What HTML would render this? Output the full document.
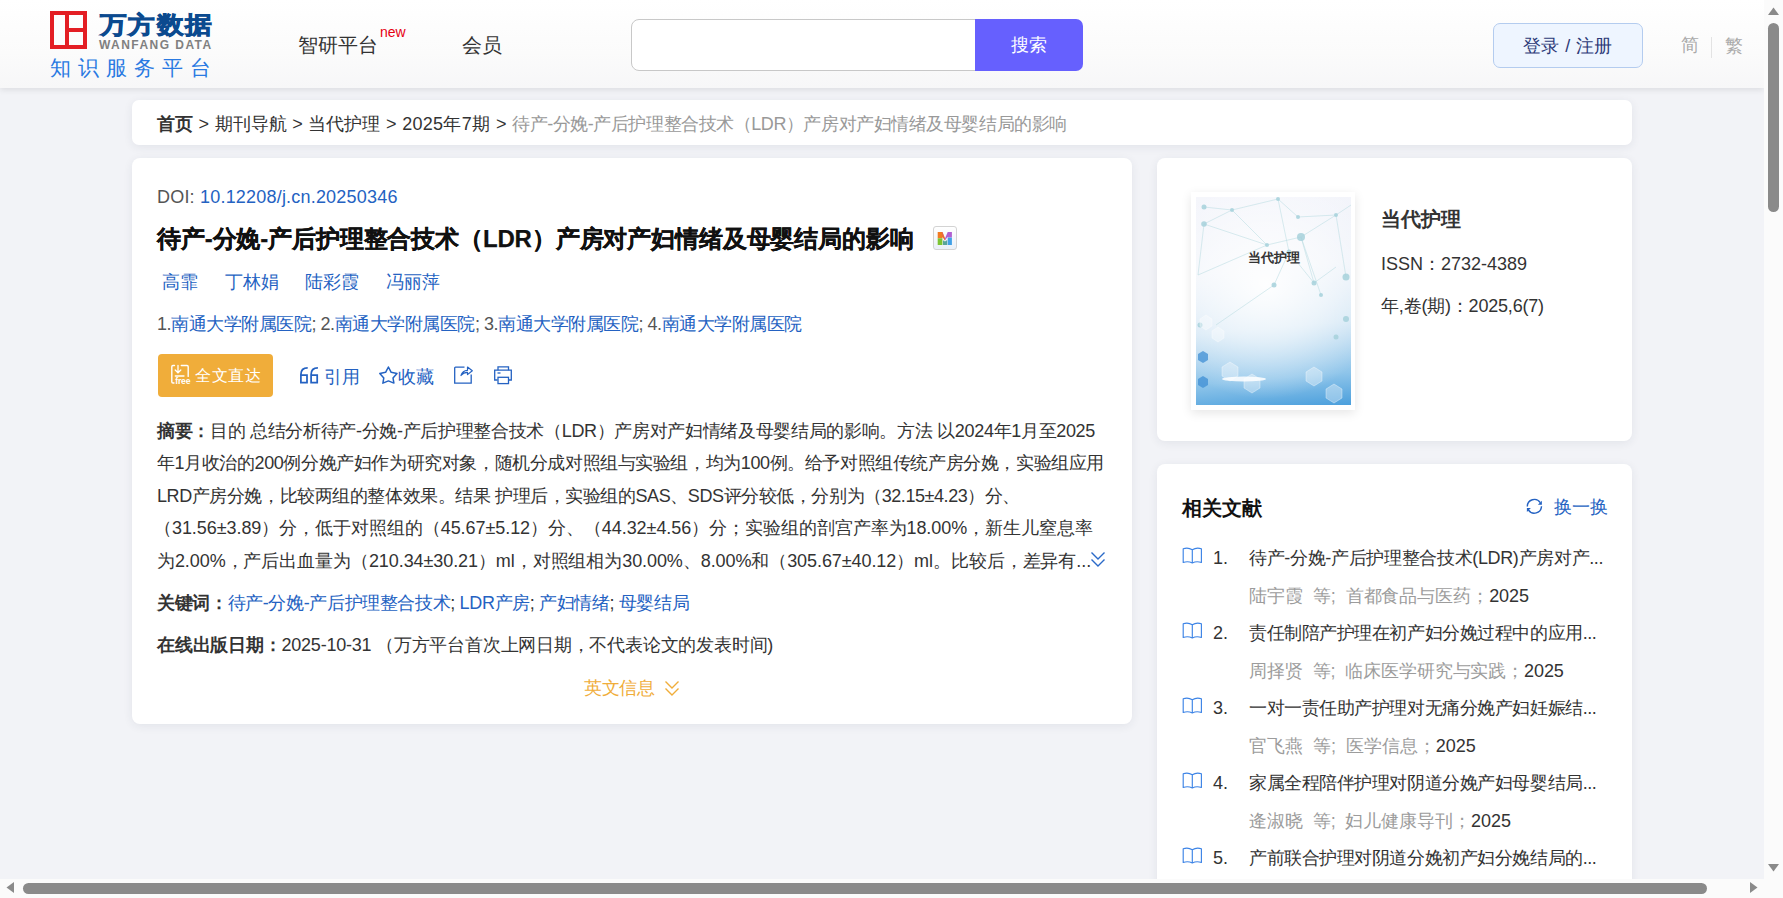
<!DOCTYPE html>
<html><head><meta charset="utf-8">
<style>
html,body{margin:0;padding:0;}
body{width:1783px;height:898px;overflow:hidden;position:relative;background:#f2f3f7;font-family:"Liberation Sans",sans-serif;color:#333;}
.a{position:absolute;white-space:nowrap;}
.card{position:absolute;background:#fff;border-radius:8px;box-shadow:0 2px 10px rgba(40,50,80,.08);}
.blue{color:#2462c2;}
svg{position:absolute;overflow:visible;}
.ab div{height:32.4px;}
.rt{font-size:18px;color:#333;}
.ra{font-size:18px;color:#9c9c9c;}
.ra i{font-style:normal;color:#333;}
</style></head><body>
<!-- header -->
<div class="a" id="hdr" style="left:0;top:0;width:1764px;height:88px;background:linear-gradient(#fff 0%,#fbfbfb 60%,#f7f7f8 100%);box-shadow:0 2px 6px rgba(0,0,0,.09);"></div>
<!-- logo -->
<div class="a" style="left:50px;top:11px;width:29px;height:30px;border:4px solid #e31e24;"></div>
<div class="a" style="left:65px;top:15px;width:4px;height:30px;background:#e31e24;"></div>
<div class="a" style="left:69px;top:28px;width:14px;height:4px;background:#e31e24;"></div>
<div class="a" style="left:100px;top:9px;font-size:27px;font-weight:bold;color:#0b4a8f;letter-spacing:1.3px;-webkit-text-stroke:0.9px #0b4a8f;transform:scaleY(0.9);transform-origin:0 0;">万方数据</div>
<div class="a" style="left:99px;top:38px;font-size:12px;font-weight:bold;color:#808080;letter-spacing:1.45px;">WANFANG DATA</div>
<div class="a" style="left:50px;top:54px;font-size:21px;color:#2a7ae2;letter-spacing:7px;">知识服务平台</div>
<!-- nav -->
<div class="a" style="left:298px;top:32px;font-size:20px;color:#333;">智研平台</div>
<div class="a" style="left:380px;top:24px;font-size:14px;color:#e60012;">new</div>
<div class="a" style="left:462px;top:32px;font-size:20px;color:#333;">会员</div>
<!-- search -->
<div class="a" style="left:631px;top:19px;width:360px;height:50px;border:1px solid #c8c8c8;border-radius:8px 0 0 8px;background:#fff;"></div>
<div class="a" style="left:975px;top:19px;width:108px;height:52px;background:#6660fe;border-radius:0 7px 7px 0;color:#fff;font-size:18px;line-height:52px;text-align:center;">搜索</div>
<!-- login -->
<div class="a" style="left:1493px;top:23px;width:148px;height:43px;border:1px solid #b4ccef;border-radius:7px;background:#eef5ff;color:#2d3a78;font-size:18px;line-height:44px;text-align:center;letter-spacing:0.4px;">登录 / 注册</div>
<div class="a" style="left:1681px;top:33px;font-size:18px;color:#aaa;">简</div>
<div class="a" style="left:1711px;top:37px;width:1px;height:21px;background:#e3e3e3;"></div>
<div class="a" style="left:1725px;top:34px;font-size:18px;color:#aaa;">繁</div>

<!-- breadcrumb -->
<div class="card" style="left:132px;top:100px;width:1500px;height:45px;border-radius:7px;"></div>
<div class="a" id="bc" style="left:157px;top:112px;font-size:18px;color:#333;"><span id="bcA" style="word-spacing:0.6px;"><b>首页</b> &gt; 期刊导航 &gt; 当代护理 &gt; <span style="letter-spacing:0.3px">2025年7期</span> &gt; </span><span id="bcB" style="color:#999;letter-spacing:-0.45px;">待产-分娩-产后护理整合技术（LDR）产房对产妇情绪及母婴结局的影响</span></div>

<!-- main card -->
<div class="card" style="left:132px;top:158px;width:1000px;height:566px;"></div>
<div class="a" id="doi" style="left:157px;top:187px;font-size:18px;color:#555;letter-spacing:0.2px;">DOI: <span class="blue">10.12208/j.cn.20250346</span></div>
<div class="a" id="title" style="left:157px;top:223px;font-size:24px;font-weight:bold;color:#111;-webkit-text-stroke:0.25px #111;letter-spacing:-0.14px;">待产-分娩-产后护理整合技术（LDR）产房对产妇情绪及母婴结局的影响</div>
<!-- M icon -->
<div class="a" style="left:933px;top:226px;width:22px;height:22px;border:1px solid #d3d3d3;border-radius:3px;background:linear-gradient(#fff,#eaf0f8);"></div>
<svg style="left:937px;top:231px" width="16" height="14" viewBox="0 0 16 14">
<path d="M0.7 0.9 H5.3 L8 7.6 V9.6 L5.5 6 V7.3 H0.7Z" fill="#f17a22"/>
<path d="M4.6 0.9 H5.6 L8 7.6 V9.6 L5.4 5Z" fill="#e4604e" opacity="0.8"/>
<rect x="0.7" y="7.3" width="4.7" height="6.7" fill="#7cc432"/>
<path d="M6 9.3 L8 10.6 L10.2 9.1 V14 H6Z" fill="#58a49a"/>
<path d="M10.7 0.9 H14.9 V6.6 H10.6 V5.8 L8 9.6 V7.6Z" fill="#b05fd2"/>
<rect x="10.7" y="6.6" width="4.2" height="7.4" fill="#41a0e6"/>
</svg>
<div class="a blue" style="left:162px;top:270px;font-size:18px;">高霏</div>
<div class="a blue" style="left:225px;top:270px;font-size:18px;">丁林娟</div>
<div class="a blue" style="left:305px;top:270px;font-size:18px;">陆彩霞</div>
<div class="a blue" style="left:386px;top:270px;font-size:18px;">冯丽萍</div>
<div class="a" id="aff" style="left:157px;top:312px;font-size:18px;color:#555;letter-spacing:-0.46px;">1.<span class="blue">南通大学附属医院</span>; 2.<span class="blue">南通大学附属医院</span>; 3.<span class="blue">南通大学附属医院</span>; 4.<span class="blue">南通大学附属医院</span></div>
<!-- buttons -->
<div class="a" style="left:158px;top:354px;width:115px;height:43px;background:#f0ad3a;border-radius:4px;"></div>
<svg style="left:170px;top:364px" width="22" height="21" viewBox="0 0 22 21">
<path d="M4.5 1.5 H3 Q1.8 1.5 1.8 2.7 V17.8 Q1.8 19 3 19 H4" fill="none" stroke="#fff" stroke-width="1.4" stroke-linecap="round"/>
<path d="M11.3 1.5 H17 Q18.2 1.5 18.2 2.7 V12.4" fill="none" stroke="#fff" stroke-width="1.4" stroke-linecap="round"/>
<path d="M8 1.3 V8.6 M5.2 6 L8 8.8 L10.8 6 M5.3 12 H14" fill="none" stroke="#fff" stroke-width="1.3" stroke-linecap="round"/>
<text x="5.3" y="19.8" font-size="8.6" font-weight="bold" fill="#fff" font-family="Liberation Sans" letter-spacing="-0.2">free</text>
</svg>
<div class="a" style="left:195px;top:366px;font-size:16px;color:#fff;letter-spacing:0.5px;">全文直达</div>
<svg style="left:299px;top:366px" width="22" height="19" viewBox="0 0 22 19">
<path d="M8.7 1.9 C4.2 1.9 1.9 3.8 1.9 8.5 V16.7 H8 V9 H1.9" fill="none" stroke="#2462c2" stroke-width="1.75"/>
<path d="M18.9 1.9 C14.4 1.9 12.1 3.8 12.1 8.5 V16.7 H18.2 V9 H12.1" fill="none" stroke="#2462c2" stroke-width="1.75"/>
</svg>
<div class="a blue" style="left:324px;top:365px;font-size:18px;">引用</div>
<svg style="left:378px;top:365px" width="20" height="20" viewBox="0 0 20 20">
<path d="M10.4 2 L13.2 7.3 L19 8.4 L15 12.9 L15.9 18.1 L10.4 15.9 L4.9 18.1 L5.8 12.9 L1.8 8.4 L7.6 7.3Z" fill="none" stroke="#2462c2" stroke-width="1.5" stroke-linejoin="round"/>
</svg>
<div class="a blue" style="left:398px;top:365px;font-size:18px;">收藏</div>
<svg style="left:453px;top:365px" width="21" height="20" viewBox="0 0 21 20">
<path d="M11.5 2.2 H2.5 Q1.7 2.2 1.7 3 V18.2 H18.2 V9.5" fill="none" stroke="#2462c2" stroke-width="1.3"/>
<path d="M8 10.5 Q9.5 5.5 14.5 5.3 V2 L19.3 5.8 L14.5 9.6 V7.3 Q10.5 7.3 8 10.5Z" fill="none" stroke="#2462c2" stroke-width="1.2" stroke-linejoin="round"/>
</svg>
<svg style="left:493px;top:365px" width="20" height="20" viewBox="0 0 20 20">
<path d="M5 5.3 V1.8 H15.5 V5.3" fill="none" stroke="#2462c2" stroke-width="1.3"/>
<path d="M4.5 15 H1.7 V5.2 H18.3 V15 H15.5" fill="none" stroke="#2462c2" stroke-width="1.3"/>
<rect x="5" y="12.3" width="10.5" height="6.3" fill="none" stroke="#2462c2" stroke-width="1.3"/>
<path d="M4.5 8 H7.5" stroke="#2462c2" stroke-width="1.3"/>
</svg>

<!-- abstract -->
<div class="a ab" id="ab" style="left:157px;top:415px;font-size:18px;color:#333;line-height:32.4px;">
<div id="l1" style="letter-spacing:-0.33px;"><b>摘要：</b>目的 总结分析待产-分娩-产后护理整合技术（LDR）产房对产妇情绪及母婴结局的影响。方法 以2024年1月至2025</div>
<div id="l2" style="letter-spacing:-0.405px;">年1月收治的200例分娩产妇作为研究对象，随机分成对照组与实验组，均为100例。给予对照组传统产房分娩，实验组应用</div>
<div id="l3" style="letter-spacing:-0.43px;">LRD产房分娩，比较两组的整体效果。结果 护理后，实验组的SAS、SDS评分较低，分别为（32.15±4.23）分、</div>
<div id="l4" style="letter-spacing:-0.06px;margin-left:-3px;">（31.56±3.89）分，低于对照组的（45.67±5.12）分、（44.32±4.56）分；实验组的剖宫产率为18.00%，新生儿窒息率</div>
<div id="l5" style="letter-spacing:-0.08px;">为2.00%，产后出血量为（210.34±30.21）ml，对照组相为30.00%、8.00%和（305.67±40.12）ml。比较后，差异有...</div>
</div>
<svg style="left:1090px;top:551px" width="16" height="17" viewBox="0 0 16 17">
<path d="M1.5 1.5 L8 8 L14.5 1.5 M1.5 8.5 L8 15 L14.5 8.5" fill="none" stroke="#2a6ac8" stroke-width="1.4"/>
</svg>
<div class="a" id="kw" style="left:157px;top:591px;font-size:18px;color:#333;letter-spacing:-0.37px;"><b>关键词：</b><span class="blue">待产-分娩-产后护理整合技术</span>; <span class="blue">LDR产房</span>; <span class="blue">产妇情绪</span>; <span class="blue">母婴结局</span></div>
<div class="a" id="dt" style="left:157px;top:633px;font-size:18px;color:#333;letter-spacing:-0.22px;"><b>在线出版日期：</b>2025-10-31 （万方平台首次上网日期，不代表论文的发表时间)</div>
<div class="a" id="ywxx" style="left:584px;top:676px;font-size:18px;color:#f0ad3a;letter-spacing:-0.5px;">英文信息</div>
<svg style="left:664px;top:680px" width="16" height="17" viewBox="0 0 16 17">
<path d="M1.5 1.5 L8 8 L14.5 1.5 M1.5 8.5 L8 15 L14.5 8.5" fill="none" stroke="#f0ad3a" stroke-width="1.4"/>
</svg>

<!-- journal card -->
<div class="card" style="left:1157px;top:158px;width:475px;height:283px;"></div>
<div class="a" style="left:1191px;top:192px;width:164px;height:218px;background:#fff;box-shadow:0 3px 10px rgba(0,0,0,.10);"></div>
<div class="a" style="left:1196px;top:197px;width:155px;height:208px;background:radial-gradient(ellipse 80% 55% at 45% 42%,rgba(255,255,255,.95) 0%,rgba(255,255,255,.55) 50%,rgba(255,255,255,0) 100%),linear-gradient(175deg,#f4f5fb 0%,#eef2f9 35%,#cfe4f4 62%,#8fc5ea 85%,#4b9fdc 100%);overflow:hidden;"></div>
<svg style="left:1196px;top:197px" width="155" height="208" viewBox="0 0 155 208">
<g stroke="#b3d9e0" stroke-width="0.6" fill="none" opacity="0.85">
<path d="M8 10 L36 13 L82 2 L102 20 L140 18 L155 8 M36 13 L71 48 L105 40 L140 18 M36 13 L8 27 L71 48 M71 48 L2 78 M82 2 L93 55 L78 88 L20 128 M105 40 L118 86 L140 70 M93 55 L118 86 M140 18 L150 80 M105 40 L125 98 M8 27 L2 78"/>
</g>
<g fill="#a7d2dc" opacity="0.85">
<circle cx="8" cy="10" r="2.5"/><circle cx="36" cy="13" r="2"/><circle cx="82" cy="2" r="2"/><circle cx="102" cy="20" r="2"/><circle cx="140" cy="18" r="2"/><circle cx="8" cy="27" r="2.8"/><circle cx="71" cy="48" r="2"/><circle cx="105" cy="40" r="4"/><circle cx="93" cy="55" r="2.5"/><circle cx="78" cy="88" r="2.5"/><circle cx="118" cy="86" r="2.5"/><circle cx="125" cy="98" r="2"/><circle cx="150" cy="80" r="3.5"/><circle cx="4" cy="128" r="2.5"/><circle cx="140" cy="140" r="2.5"/><circle cx="150" cy="122" r="3"/>
</g>
<g fill="rgba(255,255,255,0.35)" stroke="rgba(255,255,255,0.6)" stroke-width="0.6">
<path d="M4 122 L10 118 L16 122 L16 129 L10 133 L4 129Z"/>
<path d="M16 134 L22 130 L28 134 L28 141 L22 145 L16 141Z"/>
<path d="M26 170 L34 165 L42 170 L42 179 L34 184 L26 179Z"/>
<path d="M48 182 L56 177 L64 182 L64 191 L56 196 L48 191Z"/>
<path d="M110 175 L118 170 L126 175 L126 184 L118 189 L110 184Z"/>
<path d="M130 192 L138 187 L146 192 L146 201 L138 206 L130 201Z"/>
</g>
<g fill="#3f8fd5" opacity="0.75">
<path d="M2 157 L7 154 L12 157 L12 163 L7 166 L2 163Z"/>
<path d="M2 182 L7 179 L12 182 L12 188 L7 191 L2 188Z"/>
</g>
<ellipse cx="48" cy="182" rx="22" ry="2.5" fill="#fff" opacity="0.85"/>
</svg>
<div class="a" style="left:1248px;top:249px;font-size:13px;font-weight:bold;color:#333;">当代护理</div>
<div class="a" style="left:1381px;top:206px;font-size:20px;font-weight:bold;color:#333;">当代护理</div>
<div class="a" id="issn" style="left:1381px;top:252px;font-size:18px;color:#333;">ISSN：2732-4389</div>
<div class="a" id="nj" style="left:1381px;top:294px;font-size:18px;color:#333;letter-spacing:-0.2px;">年,卷(期)：2025,6(7)</div>

<!-- related card -->
<div class="card" style="left:1157px;top:464px;width:475px;height:500px;"></div>
<div class="a" style="left:1182px;top:495px;font-size:20px;font-weight:bold;color:#111;">相关文献</div>
<svg style="left:1520px;top:492px" width="30" height="28" viewBox="0 0 30 28">
<path d="M7.3 14.6 A7.1 7.1 0 0 1 20.3 10.6" fill="none" stroke="#2462c2" stroke-width="1.4"/>
<path d="M21.9 8.7 V12.7 H17.9Z" fill="#2462c2"/>
<path d="M21.5 14.2 A7.1 7.1 0 0 1 8.4 17.8" fill="none" stroke="#2462c2" stroke-width="1.4"/>
<path d="M6.9 15.9 H10.9 L6.9 19.9Z" fill="#2462c2"/>
</svg>
<div class="a blue" style="left:1554px;top:495px;font-size:18px;">换一换</div>
<svg style="left:1182px;top:547px" width="21" height="17" viewBox="0 0 21 17"><path d="M10.3 2.8 Q6 0 1.2 1.8 V15.5 Q6 13.8 10.3 16 Q14.6 13.8 19.4 15.5 V1.8 Q14.6 0 10.3 2.8 V16" fill="none" stroke="#3d84e6" stroke-width="1.15" stroke-linejoin="round"/></svg>
<div class="a rt" style="left:1213px;top:548px;">1.</div>
<div class="a rt" id="rt0" style="left:1249px;top:546px;letter-spacing:-0.34px;">待产-分娩-产后护理整合技术(LDR)产房对产...</div>
<div class="a ra" id="ra0" style="left:1249px;top:584px;letter-spacing:-0.05px;">陆宇霞&nbsp;&nbsp;等;&nbsp; 首都食品与医药；<i>2025</i></div>
<svg style="left:1182px;top:622px" width="21" height="17" viewBox="0 0 21 17"><path d="M10.3 2.8 Q6 0 1.2 1.8 V15.5 Q6 13.8 10.3 16 Q14.6 13.8 19.4 15.5 V1.8 Q14.6 0 10.3 2.8 V16" fill="none" stroke="#3d84e6" stroke-width="1.15" stroke-linejoin="round"/></svg>
<div class="a rt" style="left:1213px;top:623px;">2.</div>
<div class="a rt" id="rt1" style="left:1249px;top:621px;letter-spacing:-0.44px;">责任制陪产护理在初产妇分娩过程中的应用...</div>
<div class="a ra" id="ra1" style="left:1249px;top:659px;letter-spacing:-0.1px;">周择贤&nbsp;&nbsp;等;&nbsp; 临床医学研究与实践；<i>2025</i></div>
<svg style="left:1182px;top:697px" width="21" height="17" viewBox="0 0 21 17"><path d="M10.3 2.8 Q6 0 1.2 1.8 V15.5 Q6 13.8 10.3 16 Q14.6 13.8 19.4 15.5 V1.8 Q14.6 0 10.3 2.8 V16" fill="none" stroke="#3d84e6" stroke-width="1.15" stroke-linejoin="round"/></svg>
<div class="a rt" style="left:1213px;top:698px;">3.</div>
<div class="a rt" id="rt2" style="left:1249px;top:696px;letter-spacing:-0.44px;">一对一责任助产护理对无痛分娩产妇妊娠结...</div>
<div class="a ra" id="ra2" style="left:1249px;top:734px;letter-spacing:-0.02px;">官飞燕&nbsp;&nbsp;等;&nbsp; 医学信息；<i>2025</i></div>
<svg style="left:1182px;top:772px" width="21" height="17" viewBox="0 0 21 17"><path d="M10.3 2.8 Q6 0 1.2 1.8 V15.5 Q6 13.8 10.3 16 Q14.6 13.8 19.4 15.5 V1.8 Q14.6 0 10.3 2.8 V16" fill="none" stroke="#3d84e6" stroke-width="1.15" stroke-linejoin="round"/></svg>
<div class="a rt" style="left:1213px;top:773px;">4.</div>
<div class="a rt" id="rt3" style="left:1249px;top:771px;letter-spacing:-0.44px;">家属全程陪伴护理对阴道分娩产妇母婴结局...</div>
<div class="a ra" id="ra3" style="left:1249px;top:809px;letter-spacing:-0.06px;">逄淑晓&nbsp;&nbsp;等;&nbsp; 妇儿健康导刊；<i>2025</i></div>
<svg style="left:1182px;top:847px" width="21" height="17" viewBox="0 0 21 17"><path d="M10.3 2.8 Q6 0 1.2 1.8 V15.5 Q6 13.8 10.3 16 Q14.6 13.8 19.4 15.5 V1.8 Q14.6 0 10.3 2.8 V16" fill="none" stroke="#3d84e6" stroke-width="1.15" stroke-linejoin="round"/></svg>
<div class="a rt" style="left:1213px;top:848px;">5.</div>
<div class="a rt" id="rt4" style="left:1249px;top:846px;letter-spacing:-0.44px;">产前联合护理对阴道分娩初产妇分娩结局的...</div>

<!-- scrollbars -->
<div class="a" style="left:1764px;top:0;width:19px;height:879px;background:#fbfbfb;"></div>
<div class="a" style="left:1768px;top:23px;width:11px;height:189px;background:#8a8a8a;border-radius:6px;"></div>
<svg style="left:1764px;top:0" width="19" height="879"><path d="M4 15 L9.5 7.5 L15 15Z" fill="#8a8a8a"/><path d="M4 864 L9.5 871.5 L15 864Z" fill="#8a8a8a"/></svg>
<div class="a" style="left:0;top:879px;width:1783px;height:19px;background:#fbfbfb;"></div>
<div class="a" style="left:23px;top:883px;width:1684px;height:11px;background:#8a8a8a;border-radius:6px;"></div>
<svg style="left:0;top:879px" width="1783" height="19"><path d="M14 3 L6.5 8.5 L14 14Z" fill="#8a8a8a"/><path d="M1750 3 L1757.5 8.5 L1750 14Z" fill="#8a8a8a"/></svg>
</body></html>
